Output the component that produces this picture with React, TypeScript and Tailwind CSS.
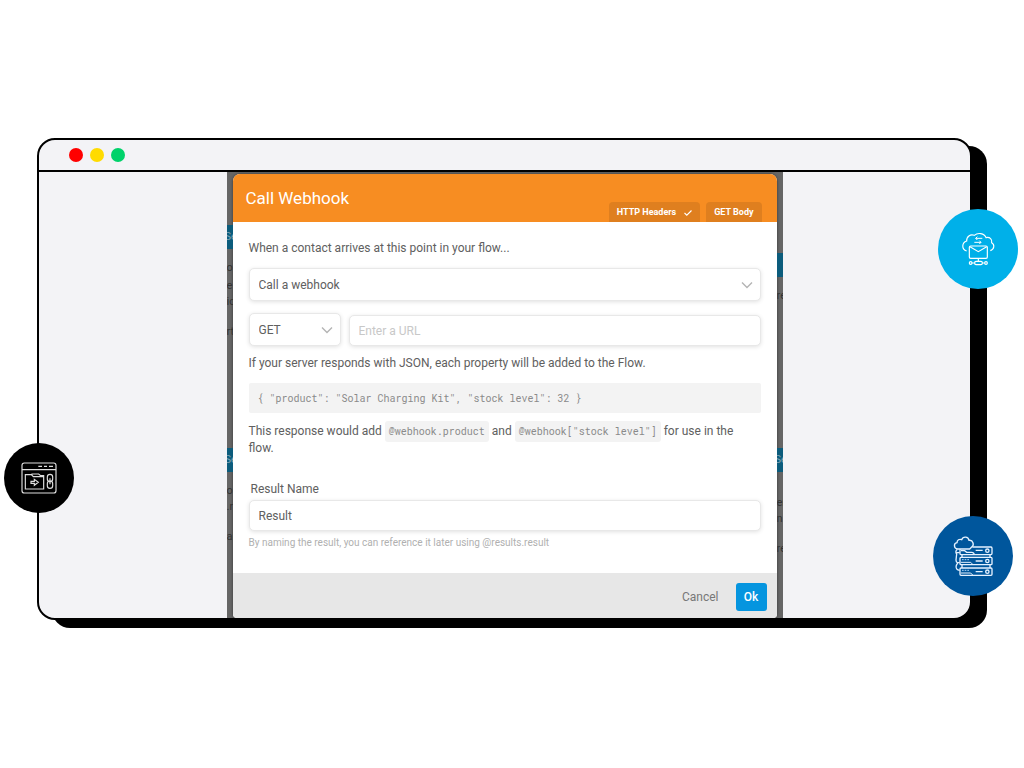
import type { ReactNode } from "react";

type GhostNode = {
  top: string;
  text: string;
  bar?: boolean;
};

const leftGhosts: GhostNode[] = [
  { top: "top-[53px]", text: "Se", bar: true },
  { top: "top-[88px]", text: "or" },
  { top: "top-[106px]", text: "e" },
  { top: "top-[122px]", text: "ic" },
  { top: "top-[152px]", text: "rt" },
  { top: "top-[276px]", text: "Se", bar: true },
  { top: "top-[311px]", text: "ou" },
  { top: "top-[327px]", text: ".r" },
  { top: "top-[357px]", text: "ai" },
];

const rightGhosts: GhostNode[] = [
  { top: "top-[81px]", text: "", bar: true },
  { top: "top-[116px]", text: "re" },
  { top: "top-[276px]", text: "Se", bar: true },
  { top: "top-[323px]", text: "er" },
  { top: "top-[339px]", text: "n" },
  { top: "top-[369px]", text: "re" },
];

function GhostStrip({ nodes }: { nodes: GhostNode[] }) {
  return (
    <div aria-hidden="true" className="relative w-[6px] shrink-0 overflow-hidden text-[11px] leading-4">
      {nodes.map((node) => (
        <div
          key={node.top}
          className={`absolute inset-x-0 ${node.top} ${
            node.bar ? "h-6 bg-[#0c5c7c] pt-1 -indent-[2px] text-[#7fa3b3]" : "h-4 text-[#333333]"
          }`}
        >
          {node.text}
        </div>
      ))}
    </div>
  );
}

function Chevron() {
  return (
    <svg
      viewBox="0 0 12 8"
      className="pointer-events-none absolute top-1/2 right-2 h-2 w-3 -translate-y-1/2"
      fill="none"
      stroke="#b4b4b4"
      strokeWidth="1.4"
    >
      <path d="M1 1.5 6 6.5 11 1.5" />
    </svg>
  );
}

const field =
  "w-full rounded-[5px] border border-[#e8e8e8] bg-white px-[9px] text-[12px] text-[#606060] shadow-[0_1px_4px_rgba(0,0,0,0.12)] outline-none";

function Code({ children }: { children: ReactNode }) {
  return (
    <code className="rounded-[3px] bg-[#f3f3f3] px-1 py-1 font-['Roboto_Mono','Liberation_Mono',monospace] text-[10px] text-[#8a8a8a]">
      {children}
    </code>
  );
}

function WebhookModal() {
  return (
    <div
      role="dialog"
      aria-labelledby="modal-title"
      className="mt-[2px] min-w-0 flex-1 overflow-hidden rounded-t-[7px] rounded-b-[4px] bg-white shadow-[0_0_3px_rgba(0,0,0,0.5)]"
    >
      <header className="flex h-12 items-end justify-between bg-[#f78d22] pr-[15px] pl-[13px] text-white">
        <h1 id="modal-title" className="self-center text-[17px] leading-6">
          Call Webhook
        </h1>
        <div className="flex gap-[6px] text-[9px] font-bold">
          <button type="button" className="flex h-5 items-center gap-2 rounded-t-[4px] bg-[#df7f1f] px-2 pt-[2px]">
            HTTP Headers
            <svg viewBox="0 0 8 8" className="h-2 w-2" fill="none" stroke="currentColor" strokeWidth="1.1">
              <path d="M.5 4 2.8 6.2 7.5 1.5" />
            </svg>
          </button>
          <button type="button" className="h-5 rounded-t-[4px] bg-[#df7f1f] px-2 pt-[2px]">
            GET Body
          </button>
        </div>
      </header>

      <div className="px-4 pt-[18px] pb-[22px] text-[12px] leading-[17px] text-[#606060]">
        <p>When a contact arrives at this point in your flow...</p>
        <div className="relative mt-[11px]">
          <select aria-label="Action" className={`${field} h-[33px] appearance-none pt-[2px]`}>
            <option>Call a webhook</option>
          </select>
          <Chevron />
        </div>

        <div className="mt-3 flex items-end gap-2">
          <div className="relative w-[92px] shrink-0">
            <select aria-label="Method" className={`${field} h-[33px] appearance-none pt-[2px]`}>
              <option>GET</option>
            </select>
            <Chevron />
          </div>
          <input
            aria-label="URL"
            placeholder="Enter a URL"
            className={`${field} h-[31px] min-w-0 flex-1 placeholder:text-[#c8c8c8]`}
          />
        </div>

        <p className="mt-[9px]">If your server responds with JSON, each property will be added to the Flow.</p>
        <pre className="mt-[11px] h-[30px] rounded-[2px] bg-[#f3f3f3] px-[9px] font-['Roboto_Mono','Liberation_Mono',monospace] text-[10px] leading-8 text-[#8a8a8a]">
          {'{ "product": "Solar Charging Kit", "stock level": 32 }'}
        </pre>
        <p className="mt-[10px]">
          This response would add <Code>@webhook.product</Code> and <Code>@webhook["stock level"]</Code> for use in
          the flow.
        </p>

        <label htmlFor="result" className="mt-6 block pl-[2px]">
          Result Name
        </label>
        <input id="result" defaultValue="Result" className={`${field} mt-[2px] block h-[31px]`} />
        <p className="mt-1 text-[10px] leading-4 text-[#b0b0b0]">
          By naming the result, you can reference it later using @results.result
        </p>
      </div>

      <footer className="flex items-center justify-end gap-[17px] bg-[#e7e7e7] px-[10px] pt-[10px] pb-[7px] text-[12px]">
        <button type="button" className="text-[#777777]">
          Cancel
        </button>
        <button type="button" className="h-7 w-[31px] rounded-[3px] bg-[#0595df] font-medium text-white">
          Ok
        </button>
      </footer>
    </div>
  );
}

function CloudMailIcon() {
  return (
    <svg viewBox="24 237 240 240" className="size-full" fill="none" stroke="white" strokeWidth="3.5">
      <path d="M110 363c-16-5-15-25 0-30-1-13 11-22 23-17 10-9 30-7 35 7 12-3 19 6 17 15 10 6 8 20-4 24" />
      <path d="M157 325h-20l5-5M137 325l5 5M133 337h20l-5-5M153 337l-5 5" strokeWidth="3" />
      <rect x="118" y="348" width="54" height="37" rx="4" />
      <path d="m120 350 25 15 25-15M145 385v8" />
      <rect x="134" y="394" width="23" height="10" rx="4" />
      <circle cx="122" cy="399" r="4" />
      <circle cx="168" cy="399" r="4" />
      <path d="M126 399h8M157 399h7" />
    </svg>
  );
}

function ServerCloudIcon() {
  return (
    <svg viewBox="38 48 240 240" className="size-full" fill="none" stroke="#e6f2ff" strokeWidth="4">
      <path d="M112 147c-12-1-13-17-2-19 0-8 7-12 14-9 4-11 20-10 22 2 12-2 17 14 8 20l-6 6z" />
      <path d="M111 148c-6 3-5 11-2 14l-2 18c0 5 2 8 5 9l-4 7c-3 9 2 15 10 15M109 158h9M110 188h8" />
      <path d="M156 141h56q3 0 3 4v15q0 4-3 4h-50M119 148v13q0 3 4 3h39q-1-7-8-7h-15l-6-5h-11" />
      <rect x="119" y="172" width="96" height="22" rx="3" />
      <rect x="119" y="204" width="96" height="22" rx="3" />
      <path d="M125 165v7M209 165v7M125 195v9M209 195v9" />
      <path d="M122 187h29l6 6M122 219h29l6 6" strokeWidth="3" />
      <path d="M125 179h23M125 211h23" strokeDasharray="5 3" stroke="#a9d4f8" strokeWidth="3" />
      <path d="M166 151h21M166 183h21M166 215h21" />
      <circle cx="201" cy="152" r="5" />
      <circle cx="201" cy="183" r="5" />
      <circle cx="201" cy="215" r="5" />
    </svg>
  );
}

function BrowserFolderIcon() {
  return (
    <svg viewBox="10 38 210 210" className="size-full" fill="none" stroke="#dedede" strokeWidth="3.5">
      <rect x="64" y="98" width="102" height="90" rx="7" />
      <path d="M64 118h102" />
      <path d="M113 108h11M130 108h9M145 108h12" />
      <path d="M74 133h18l6 6h31v37H74zM94 133v-2h20l6 5h9v4" />
      <path d="M91 153h10v-6l12 9-12 9v-6H91z" />
      <rect x="140" y="132" width="16" height="22" rx="8" />
      <rect x="140" y="152" width="16" height="22" rx="8" />
      <path d="M148 144v18" />
    </svg>
  );
}

export default function App() {
  return (
    <main className="min-h-screen overflow-hidden bg-white pt-[138px] pr-[52px] pb-16 pl-[37px] font-['Roboto','Liberation_Sans',sans-serif]">
      <div className="relative">
        <section className="overflow-hidden rounded-[18px] border-2 border-black bg-[#f3f3f6] shadow-[15px_8px_0_#000]">
          <div className="flex h-8 items-center gap-[7px] border-b-2 border-black pl-[30px]">
            <span className="size-[14px] rounded-full bg-[#ff0000]" />
            <span className="size-[14px] rounded-full bg-[#ffdb00]" />
            <span className="size-[14px] rounded-full bg-[#00d26a]" />
          </div>
          <div className="mx-auto flex w-full max-w-[556px] bg-[#666666]">
            <GhostStrip nodes={leftGhosts} />
            <WebhookModal />
            <GhostStrip nodes={rightGhosts} />
          </div>
        </section>

        <div className="absolute top-[71px] -right-[46px] size-20 rounded-full bg-[#00b0e9]">
          <CloudMailIcon />
        </div>
        <div className="absolute top-[378px] -right-[41px] size-20 rounded-full bg-[#00569c]">
          <ServerCloudIcon />
        </div>
        <div className="absolute top-[305px] -left-[33px] size-[70px] rounded-full bg-black">
          <BrowserFolderIcon />
        </div>
      </div>
    </main>
  );
}
